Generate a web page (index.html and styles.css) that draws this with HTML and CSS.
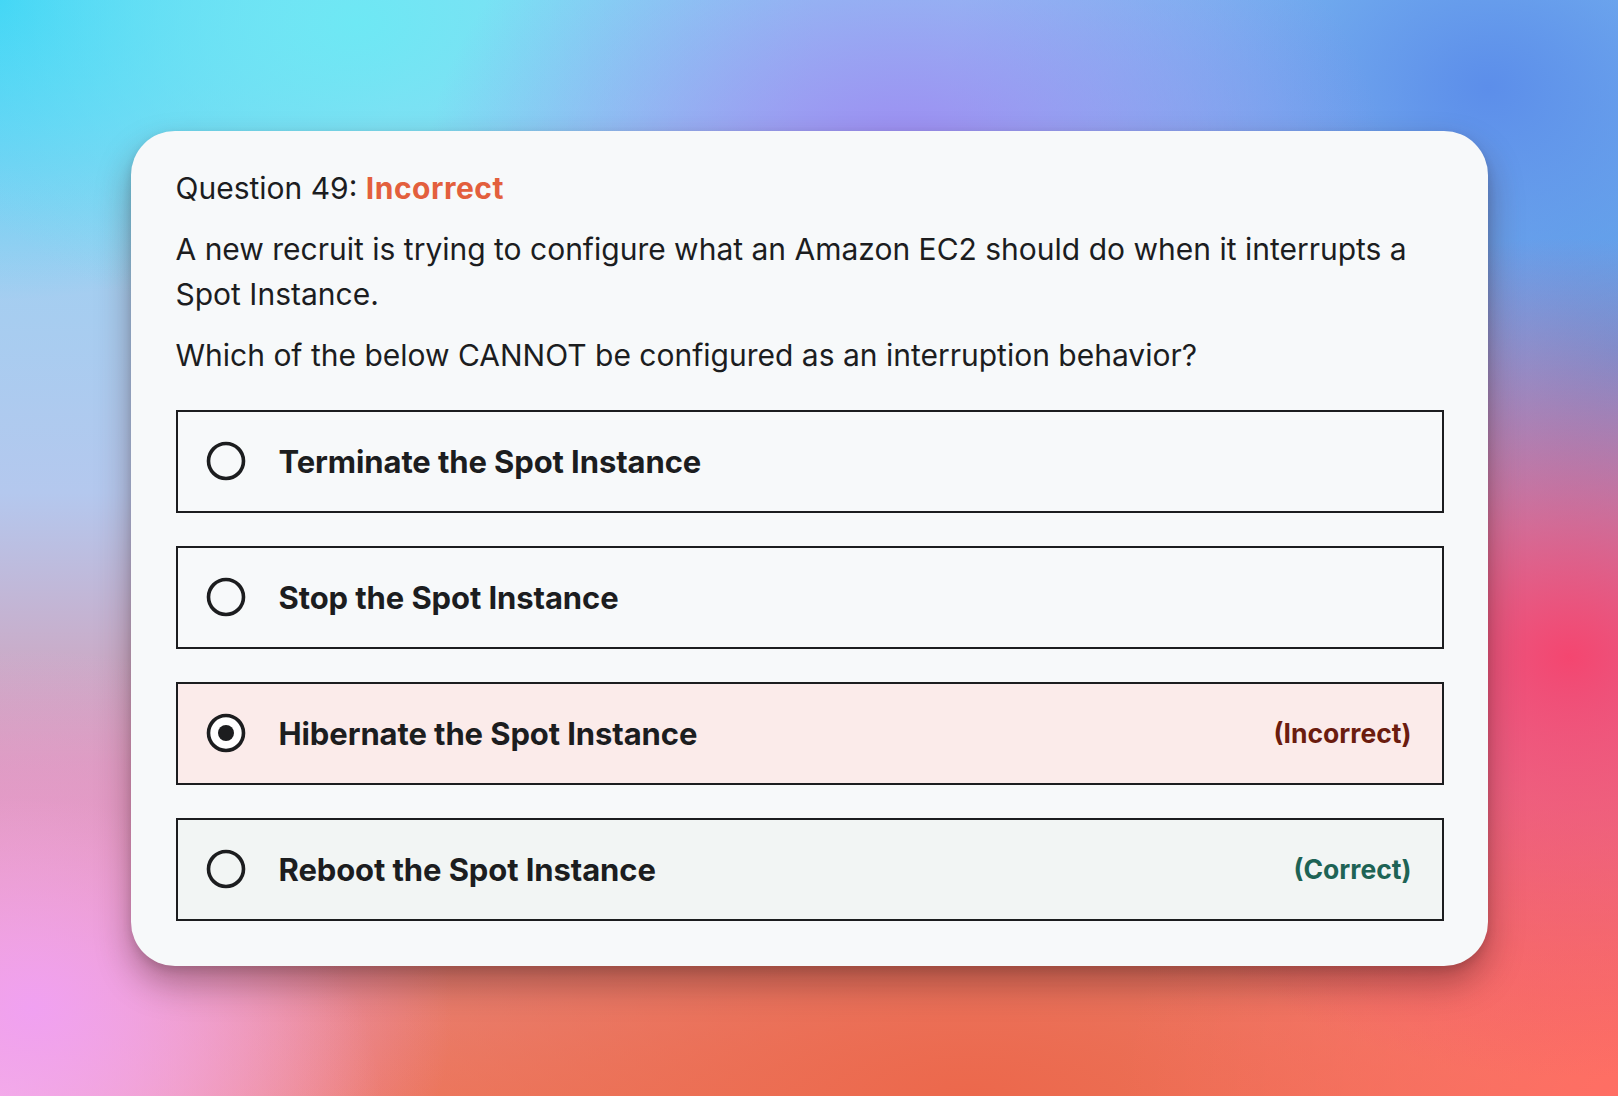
FILE: index.html
```html
<!DOCTYPE html>
<html lang="en">
<head>
<meta charset="utf-8">
<title>Question 49</title>
<link rel="stylesheet" href="styles.css">
</head>
<body>
<main class="stage">
  <section class="card">
    <h2 class="q-title">Question 49: <span class="q-status">Incorrect</span></h2>
    <p class="q-text">A new recruit is trying to configure what an Amazon EC2 should do when it interrupts a Spot Instance.</p>
    <p class="q-text">Which of the below CANNOT be configured as an interruption behavior?</p>
    <ul class="options">
      <li class="option">
        <svg class="radio" viewBox="0 0 40 40" width="40" height="40"><circle cx="20" cy="20" r="17.5" fill="none" stroke="#1c1d1f" stroke-width="3.6"/></svg>
        <span class="option-label">Terminate the Spot Instance</span>
      </li>
      <li class="option">
        <svg class="radio" viewBox="0 0 40 40" width="40" height="40"><circle cx="20" cy="20" r="17.5" fill="none" stroke="#1c1d1f" stroke-width="3.6"/></svg>
        <span class="option-label">Stop the Spot Instance</span>
      </li>
      <li class="option option-wrong">
        <svg class="radio" viewBox="0 0 40 40" width="40" height="40"><circle cx="20" cy="20" r="17.5" fill="#ffffff" stroke="#1c1d1f" stroke-width="3.6"/><circle cx="20" cy="20" r="8" fill="#1c1d1f"/></svg>
        <span class="option-label">Hibernate the Spot Instance</span>
        <span class="option-tag tag-wrong">(Incorrect)</span>
      </li>
      <li class="option option-right">
        <svg class="radio" viewBox="0 0 40 40" width="40" height="40"><circle cx="20" cy="20" r="17.5" fill="none" stroke="#1c1d1f" stroke-width="3.6"/></svg>
        <span class="option-label">Reboot the Spot Instance</span>
        <span class="option-tag tag-right">(Correct)</span>
      </li>
    </ul>
  </section>
</main>
</body>
</html>
```
FILE: styles.css
```css
* { box-sizing: border-box; }

html, body {
  margin: 0;
  padding: 0;
  height: 100%;
}

body {
  font-family: Inter, "Open Sans", "Liberation Sans", sans-serif;
  color: #1c1d1f;
  background-color: #b8b8ee;
  background-image:
    radial-gradient(ellipse 420px 360px at 2% 92%, rgba(240, 160, 244, 0.95), rgba(240, 160, 244, 0) 100%),
    radial-gradient(ellipse 380px 300px at 0% 100%, rgba(250, 200, 220, 0.9), rgba(250, 200, 220, 0) 100%),
    radial-gradient(ellipse 520px 420px at 97% 60%, rgba(244, 70, 112, 1), rgba(244, 70, 112, 0) 100%),
    radial-gradient(ellipse 500px 420px at 100% 100%, rgba(255, 110, 100, 1), rgba(255, 110, 100, 0) 100%),
    radial-gradient(ellipse 900px 380px at 60% 100%, rgba(236, 104, 76, 1), rgba(236, 104, 76, 0) 100%),
    radial-gradient(ellipse 480px 360px at 56% 16%, rgba(156, 136, 242, 1), rgba(156, 136, 242, 0) 100%),
    radial-gradient(ellipse 540px 440px at 92% 8%, rgba(92, 142, 234, 1), rgba(92, 142, 234, 0) 100%),
    radial-gradient(ellipse 300px 380px at 100% 32%, rgba(90, 176, 232, 1), rgba(90, 176, 232, 0) 100%),
    radial-gradient(ellipse 460px 320px at 22% 2%, rgba(110, 232, 244, 1), rgba(110, 232, 244, 0) 100%),
    radial-gradient(ellipse 420px 300px at 0% 0%, rgba(56, 210, 246, 1), rgba(56, 210, 246, 0) 100%),
    linear-gradient(180deg, #8fd6f4 0%, #b4c8ee 45%, #d89ab0 70%, #ec8068 100%);
}

.stage {
  min-height: 100vh;
  display: flex;
  align-items: center;
  justify-content: center;
}

.card {
  width: 1357px;
  background: #f7f9fa;
  border-radius: 44px;
  padding: 35px 44px 45px 45px;
  box-shadow: 0 18px 34px rgba(60, 20, 20, 0.38), 0 4px 10px rgba(0, 0, 0, 0.12);
}

.q-title {
  margin: 0 0 16px;
  font-size: 30px;
  line-height: 45px;
  font-weight: 400;
}

.q-status {
  color: #e35f3d;
  font-weight: 700;
  letter-spacing: 0.5px;
}

.q-text {
  margin: 0 0 16px;
  font-size: 30px;
  line-height: 45px;
  font-weight: 400;
}

.options {
  list-style: none;
  margin: 32px 0 0;
  padding: 0;
  display: flex;
  flex-direction: column;
  gap: 33px;
}

.option {
  height: 103px;
  border: 2px solid #1c1d1f;
  display: flex;
  align-items: center;
  padding: 0 30px 0 28px;
}

.option-wrong { background: #fbebea; }
.option-right { background: #f2f5f4; }

.radio {
  flex: none;
  margin-right: 33px;
}

.option-label {
  font-size: 31px;
  font-weight: 700;
  letter-spacing: -0.1px;
}

.option-tag {
  margin-left: auto;
  font-size: 26.5px;
  font-weight: 700;
}

.tag-wrong { color: #6b1c0f; }
.tag-right { color: #1e6355; }
```
